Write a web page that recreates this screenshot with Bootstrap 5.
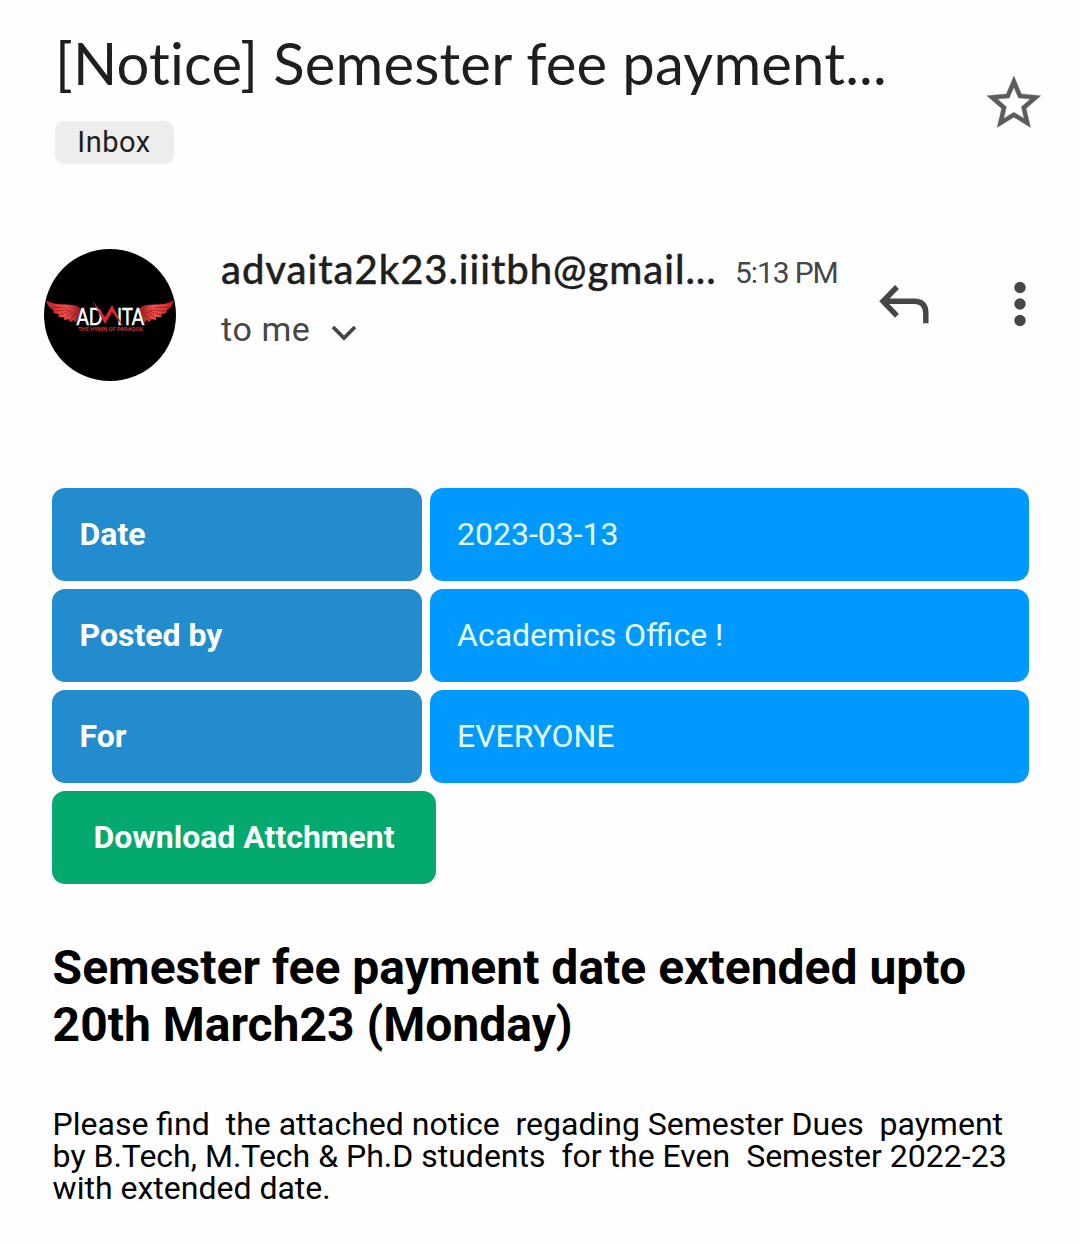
<!DOCTYPE html>
<html lang="en">
<head>
<meta charset="utf-8">
<meta name="viewport" content="width=device-width, initial-scale=1">
<title>[Notice] Semester fee payment</title>
<link rel="stylesheet" href="https://cdn.jsdelivr.net/npm/bootstrap@5.3.0/dist/css/bootstrap.min.css">
<style>
body{font-family:Roboto,"Liberation Sans",sans-serif;color:#1f1f1f;background:#fefefe;overflow-x:hidden}
.mail{width:1080px;height:1244px;overflow:hidden}
.subject-bar{height:210px;padding:29px 38px 0 55px}
.subject{font-family:Lato,sans-serif;font-size:58px;line-height:68px;letter-spacing:.17px;font-weight:400;color:#1f1f1f}
.chip{width:119px;height:43px;margin-top:24px;border-radius:9px;background:#ededed;font-size:29px;line-height:43px;letter-spacing:.5px;text-indent:-1px}
.star{margin-top:46px}
.sender-bar{height:278px;padding:39px 40px 0 44px}
.avatar{width:132px;height:132px}
.sender{margin-left:44px;width:640px;padding-left:1px}
.address{font-family:Lato,sans-serif;font-weight:500;font-size:40px;line-height:40px;width:496px;letter-spacing:.94px;-webkit-text-stroke:.4px #1f1f1f}
.stamp{font-size:30px;line-height:48px;height:46px;color:#444746;margin-left:18px;letter-spacing:-1.1px}
.recipient{font-size:34px;line-height:44px;color:#444746;margin-top:12px;letter-spacing:.6px}
.caret{margin:9px 0 0 21px}
.actions{margin:26px 0 0 16px}
.notice{padding:0 51px 0 52px;color:#000}
.facts{gap:8px}
.cell-key,.cell-val{height:93px;border-radius:13px;font-size:32px;line-height:93px;color:#fff}
.cell-key{width:370px;padding-left:27.5px;background:#228ccf;font-weight:700}
.cell-val{padding-left:27px;background:#0099ff;color:#e6ffff}
.download{width:384px;height:93px;border-radius:13px;background:#04aa6d;font-size:32px;line-height:93px;color:#fff}
.headline{font-size:48px;line-height:57px;margin-top:55px;padding-left:.6px;color:#000}
.words{font-size:32px;line-height:32px;margin-top:55px;padding-left:.6px;white-space:pre}
</style>
<script src="https://cdn.jsdelivr.net/npm/bootstrap@5.3.0/dist/js/bootstrap.bundle.min.js"></script>
</head>
<body>
<main class="mail">
  <header class="subject-bar d-flex justify-content-between align-items-start">
    <div>
      <h1 class="subject m-0 text-nowrap">[Notice] Semester fee payment...</h1>
      <div class="chip text-center">Inbox</div>
    </div>
    <svg class="star" width="56" height="54" viewBox="1.700 1.600 20.700 20"><path fill="#5c5c5c" stroke="#5c5c5c" stroke-width=".12" d="M22 9.240l-7.190-.620L12 2 9.190 8.630 2 9.240l5.460 4.730L5.820 21 12 17.270 18.180 21l-1.630-7.030L22 9.240zM12 15.400l-3.760 2.270 1-4.280-3.320-2.880 4.380-.380L12 6.100l1.710 4.040 4.380.380-3.320 2.880 1 4.280L12 15.400z"/></svg>
  </header>

  <section class="sender-bar d-flex align-items-start">
    <svg class="avatar flex-shrink-0" viewBox="0 0 132 132">
      <defs>
        <linearGradient id="wing" x1="0" x2="1"><stop offset="0" stop-color="#c5161c"/><stop offset=".55" stop-color="#f75050"/><stop offset="1" stop-color="#8d1517"/></linearGradient>
        <g id="feathers">
          <path fill="url(#wing)" d="M1.500 51c7 4.500 15 4.500 24 4.700 7 .5 10 2 12 5.300l-6 13-2-3-3 2-2-3-4 1-1-3-5 0 0-3-5-1 0-3C6 60 3 55 1.500 51z"/>
          <path fill="none" stroke="#500" stroke-width=".45" d="M7 58l15 1M11 62l14-1M15 66l12-4M20 69l9-6M26 71l6-7"/>
        </g>
      </defs>
      <circle cx="66" cy="66" r="66"/>
      <use href="#feathers"/>
      <use href="#feathers" transform="translate(132 0) scale(-1 1)"/>
      <g font-family="Lato,sans-serif" font-size="23" fill="#fff" stroke="#fff" stroke-width=".5">
        <text x="32.500" y="75.500" textLength="26" lengthAdjust="spacingAndGlyphs">AD</text>
        <text x="73" y="75.500" textLength="27" lengthAdjust="spacingAndGlyphs">ITA</text>
      </g>
      <path fill="#e0262b" d="M48 51l13 17 7-12 12 23-12-16-7 12z"/>
      <text x="34" y="81.800" font-family="Roboto,sans-serif" font-size="5" font-weight="700" fill="#c52e30" textLength="65" lengthAdjust="spacingAndGlyphs">THE HYMN OF PARADOX</text>
    </svg>
    <div class="sender flex-shrink-0">
      <div class="d-flex text-nowrap">
        <span class="address">advaita2k23.iiitbh@gmail...</span>
        <span class="stamp">5:13 PM</span>
      </div>
      <div class="recipient d-flex align-items-center">to me
        <svg class="caret" width="26" height="18" viewBox="0 0 26 18"><path d="M2 2l11 11L24 2" fill="none" stroke="#444746" stroke-width="3.800"/></svg>
      </div>
    </div>
    <svg width="164" height="60" viewBox="876.500 275 164 60" class="actions flex-shrink-0">
      <path d="M897.500 287L883.500 301.300l14 14.500M883 301.300h31.500q11.800 0 11.800 12v10" fill="none" stroke="#444746" stroke-width="5.400"/>
      <g fill="#444746"><circle cx="1020.500" cy="287.500" r="5.700"/><circle cx="1020.500" cy="304" r="5.700"/><circle cx="1020.500" cy="320.500" r="5.700"/></g>
    </svg>
  </section>

  <article class="notice">
    <div class="facts d-flex flex-column">
      <div class="facts d-flex"><div class="cell-key flex-shrink-0">Date</div><div class="cell-val flex-grow-1">2023-03-13</div></div>
      <div class="facts d-flex"><div class="cell-key flex-shrink-0">Posted by</div><div class="cell-val flex-grow-1">Academics Office !</div></div>
      <div class="facts d-flex"><div class="cell-key flex-shrink-0">For</div><div class="cell-val flex-grow-1">EVERYONE</div></div>
      <a href="#" class="download d-block text-center text-decoration-none fw-bold">Download Attchment</a>
    </div>
    <h2 class="headline fw-bold mb-0">Semester fee payment date extended upto<br>20th March23 (Monday)</h2>
    <p class="words mb-0">Please find  the attached notice  regading Semester Dues  payment
by B.Tech, M.Tech &amp; Ph.D students  for the Even  Semester 2022-23
with extended date.</p>
  </article>
</main>
</body>
</html>
